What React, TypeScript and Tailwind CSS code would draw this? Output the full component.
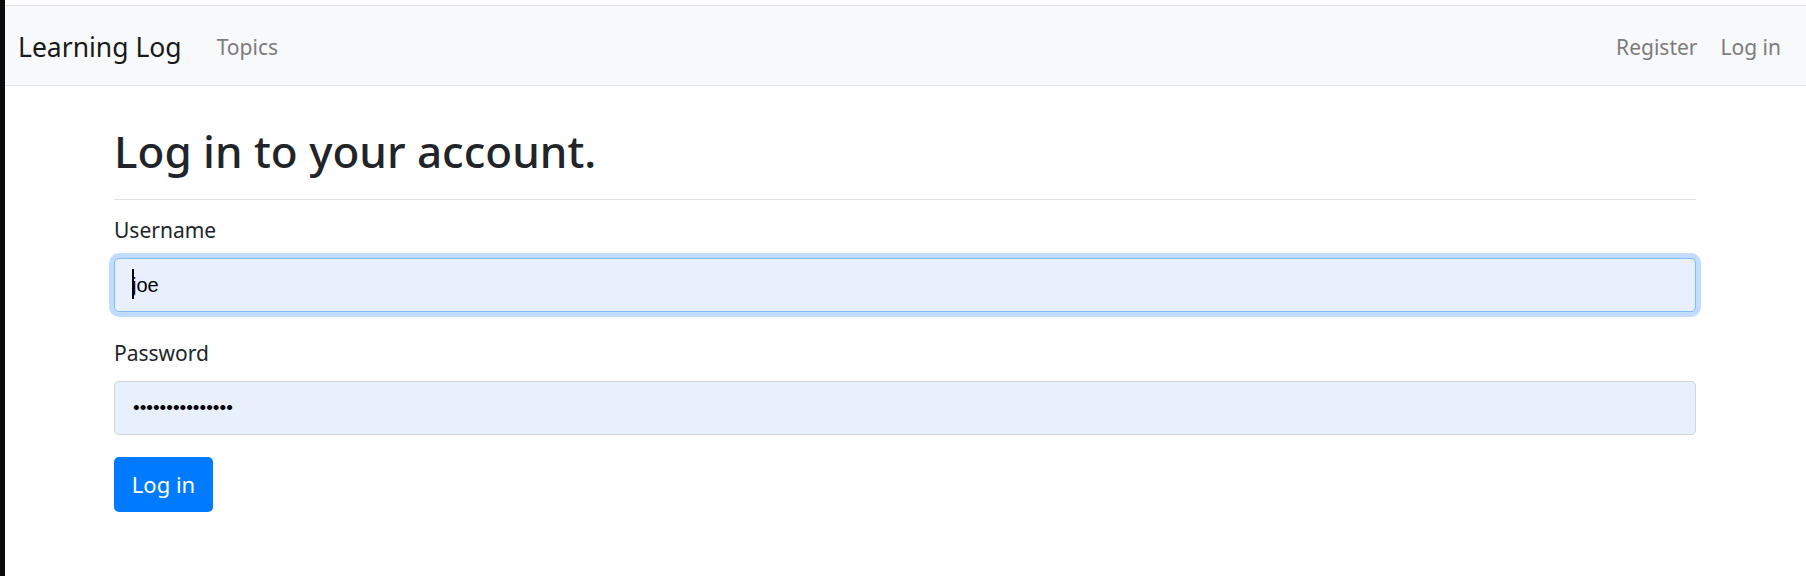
import React from "react";

const NavBar = () => {
  return (
    <nav className="mt-[5px] h-[81px] border-y border-[#dfe2e6] bg-[#f8f9fa] flex items-center pt-[3px] pl-[13px] pr-[25px]">
      <a className="text-[26.5px] text-[#191919] leading-none">Learning Log</a>
      <a className="ml-[35px] text-[21px] text-[#7c7c7d] leading-none">Topics</a>
      <div className="ml-auto flex flex-row gap-[23px]">
        <a className="text-[21px] text-[#7c7c7d] leading-none">Register</a>
        <a className="text-[21px] text-[#7c7c7d] leading-none">Log in</a>
      </div>
    </nav>
  );
};

const App = () => {
  return (
    <div
      className="flex flex-row w-full h-[576px] bg-white"
      style={{ fontFamily: '"Noto Sans", "Open Sans", sans-serif' }}
    >
      <div className="w-[5px] bg-[#0b0b0b]" />
      <div className="flex flex-col flex-1">
        <NavBar />
        <main className="ml-[109px] mr-[110px] flex flex-col">
          <div className="mt-[35px] pb-[18px] border-b border-[#dee2e6]">
            <div className="h-[60px] flex items-center">
              <h2 className="text-[44px] font-medium text-[#212529] leading-none">
                Log in to your account.
              </h2>
            </div>
          </div>

          <form className="flex flex-col">
            <label className="mt-[16px] h-[30px] flex items-center text-[21px] text-[#212529]">
              Username
            </label>
            <div className="relative mt-[12px]">
              <input
                type="text"
                readOnly
                value="joe"
                className="w-full h-[54px] rounded-[5px] border border-[#80bdff] bg-[#e8f0fe] pl-[17px] text-[20px] text-black outline-none ring-[5px] ring-[#c0ddff]"
                style={{ fontFamily: '"Liberation Sans", Arial, sans-serif' }}
              />
              <span className="absolute left-[18px] top-[11px] w-[2px] h-[30px] bg-black" />
            </div>

            <label className="mt-[27px] h-[30px] flex items-center text-[21px] text-[#212529]">
              Password
            </label>
            <input
              type="password"
              readOnly
              value="joepassword1234"
              className="mt-[12px] w-full h-[54px] rounded-[5px] border border-[#ced4da] bg-[#e8f0fe] pl-[18px] text-[19px] text-black outline-none"
              style={{ fontFamily: '"Liberation Sans", Arial, sans-serif' }}
            />

            <div className="mt-[22px]">
              <button
                type="button"
                className="w-[99px] h-[55px] rounded-[5px] bg-[#007bff] text-white text-[22px] flex items-center justify-center"
              >
                Log in
              </button>
            </div>
          </form>
        </main>
      </div>
    </div>
  );
};

export default App;
